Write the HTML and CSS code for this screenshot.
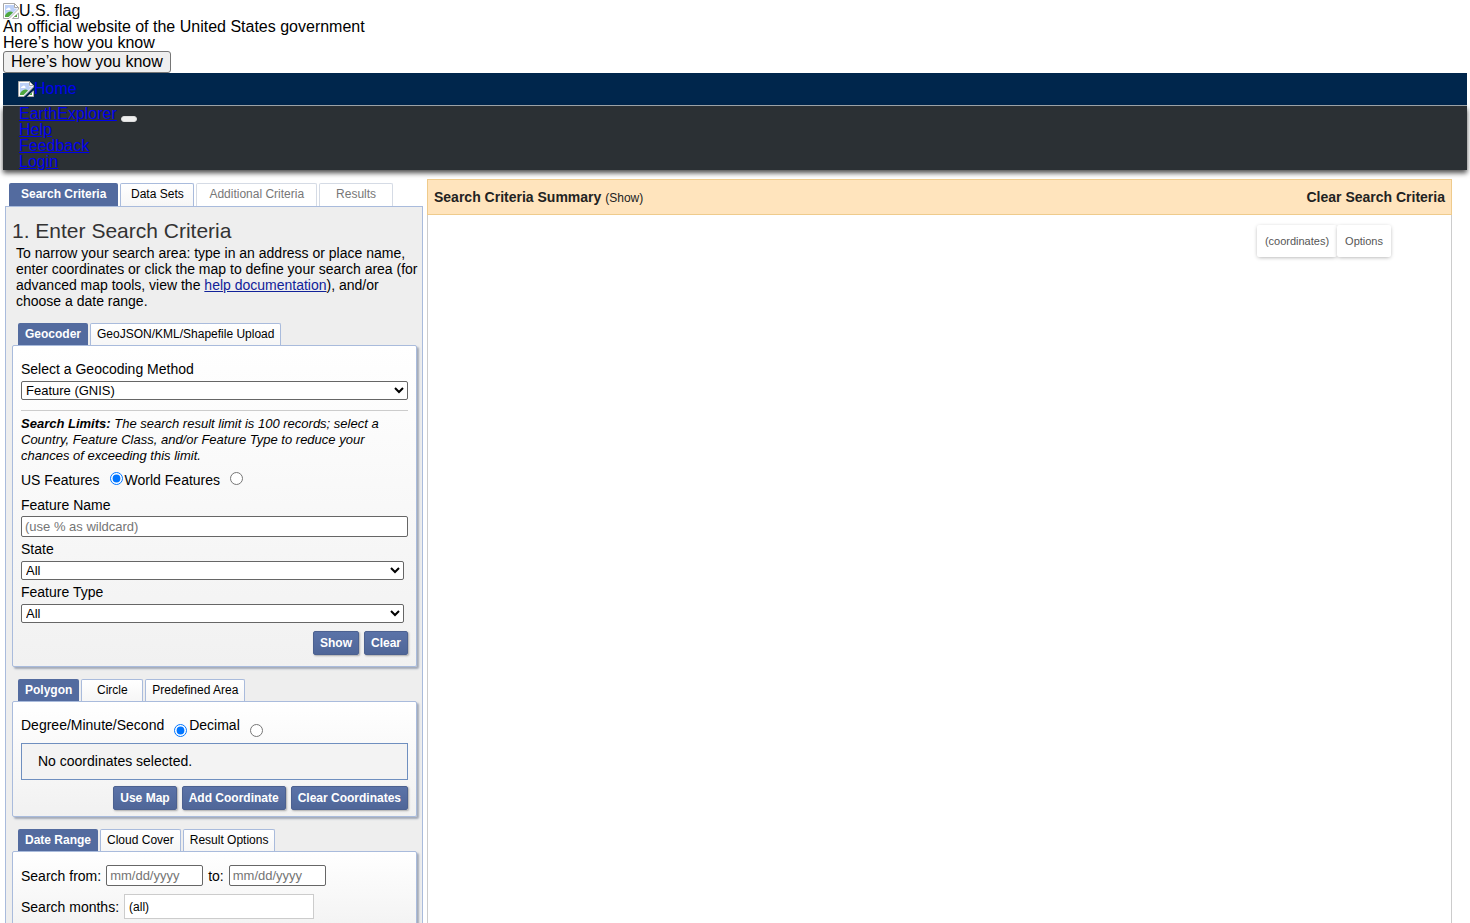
FILE: index.html
```html
<!DOCTYPE html>
<html lang="en">
<head>
    <meta charset="UTF-8">
    <meta name="viewport" content="width=device-width, initial-scale=1.0">
    <title>EarthExplorer</title>
    <link rel="stylesheet" href="styles.css">
</head>
<body>
    <svg class="defs" width="0" height="0" aria-hidden="true">
        <symbol id="photo" viewBox="0 0 16 16">
            <path d="M.5 .5h11l4 4V6l-9.500 9.500H.5z" fill="#fff" stroke="#a9a9a9"/>
            <path d="M2 2h9v3.500h3.500L6 14H2z" fill="#bcd0f7"/>
            <path d="M3.500 7h3.500c.8 0 .8-1.400 0-1.500-.3-1.200-1.800-1.200-2.200-.2-.8-.2-1.200.2-1.200.6-.8.200-.8 1.100-.1 1.100z" fill="#fff"/>
            <path d="M2 14v-1.500C3.500 10 5.500 8.500 7.500 8.500c1 0 1.800.3 2.500 1L5.500 14z" fill="#4fa83d"/>
            <path d="M11.500 .5v4h4z" fill="#fff" stroke="#a9a9a9"/>
            <path d="M9.500 15.500l6-5.500v5.500z" fill="#fff" stroke="#a9a9a9"/>
            <path d="M11 14l3-2.500V14z" fill="#4fa83d"/>
        </symbol>
    </svg>

    <div class="gov-banner">
        <div class="picture"><svg class="photo"><use href="#photo"/></svg>U.S. flag</div>
        <p>An official website of the United States government</p>
        <p>Here’s how you know</p>
        <button type="button" class="gov-button">Here’s how you know</button>
    </div>

    <header class="header">
        <div class="logo-bar">
            <a class="picture" href="#"><svg class="photo"><use href="#photo"/></svg>Home</a>
        </div>
        <nav class="nav">
            <div class="brand">
                <a href="#">EarthExplorer</a>
                <button type="button" class="nav-toggle" aria-label="Toggle navigation"></button>
            </div>
            <ul>
                <li><a href="#">Help</a></li>
                <li><a href="#">Feedback</a></li>
                <li><a href="#">Login</a></li>
            </ul>
        </nav>
    </header>

    <main class="main">
        <div class="sidebar">
            <div class="tabs main-tabs">
                <button type="button" class="tab tab-wide active">Search Criteria</button>
                <button type="button" class="tab">Data Sets</button>
                <button type="button" class="tab tab-wide" disabled>Additional Criteria</button>
                <button type="button" class="tab" disabled>Results</button>
            </div>
            <div class="criteria">
                <h1>1. Enter Search Criteria</h1>
                <p class="intro">To narrow your search area: type in an address or place name, enter coordinates or click the map to define your search area (for advanced map tools, view the <a href="#">help documentation</a>), and/or choose a date range.</p>

                <div class="tabs">
                    <button type="button" class="tab active">Geocoder</button>
                    <button type="button" class="tab">GeoJSON/KML/Shapefile Upload</button>
                </div>
                <form class="panel">
                    <div class="field method">
                        <label for="method">Select a Geocoding Method</label>
                        <select id="method"><option>Feature (GNIS)</option></select>
                    </div>
                    <p class="limits"><strong>Search Limits:</strong> The search result limit is 100 records; select a Country, Feature Class, and/or Feature Type to reduce your chances of exceeding this limit.</p>
                    <div class="radios">
                        <label for="us">US Features</label>
                        <input type="radio" id="us" name="features" checked>
                        <label for="world">World Features</label>
                        <input type="radio" id="world" name="features">
                    </div>
                    <div class="field">
                        <label for="name">Feature Name</label>
                        <input type="text" id="name" placeholder="(use % as wildcard)">
                    </div>
                    <div class="field short">
                        <label for="state">State</label>
                        <select id="state"><option>All</option></select>
                    </div>
                    <div class="field short">
                        <label for="type">Feature Type</label>
                        <select id="type"><option>All</option></select>
                    </div>
                    <div class="actions">
                        <button type="button" class="btn">Show</button>
                        <button type="button" class="btn">Clear</button>
                    </div>
                </form>

                <div class="tabs">
                    <button type="button" class="tab active">Polygon</button>
                    <button type="button" class="tab">Circle</button>
                    <button type="button" class="tab">Predefined Area</button>
                </div>
                <form class="panel panel-area">
                    <div class="radios radios-low">
                        <label for="dms">Degree/Minute/Second</label>
                        <input type="radio" id="dms" name="units" checked>
                        <label for="decimal">Decimal</label>
                        <input type="radio" id="decimal" name="units">
                    </div>
                    <p class="coordinates">No coordinates selected.</p>
                    <div class="actions">
                        <button type="button" class="btn">Use Map</button>
                        <button type="button" class="btn">Add Coordinate</button>
                        <button type="button" class="btn">Clear Coordinates</button>
                    </div>
                </form>

                <div class="tabs">
                    <button type="button" class="tab active">Date Range</button>
                    <button type="button" class="tab">Cloud Cover</button>
                    <button type="button" class="tab">Result Options</button>
                </div>
                <form class="panel">
                    <div class="dates">
                        <label for="from">Search from:</label>
                        <input type="text" id="from" placeholder="mm/dd/yyyy">
                        <label for="to">to:</label>
                        <input type="text" id="to" placeholder="mm/dd/yyyy">
                    </div>
                    <div class="dates">
                        <label for="months">Search months:</label>
                        <button type="button" class="months" id="months">(all)</button>
                    </div>
                </form>
            </div>
        </div>

        <section class="map">
            <div class="summary">
                <div>
                    <strong>Search Criteria Summary</strong>
                    <button type="button" class="text-button">(Show)</button>
                </div>
                <button type="button" class="text-button clear-all">Clear Search Criteria</button>
            </div>
            <div class="map-controls">
                <button type="button">(coordinates)</button>
                <button type="button">Options</button>
            </div>
        </section>
    </main>
</body>
</html>
```
FILE: styles.css
```css
* {
    box-sizing: border-box;
}

body {
    display: flex;
    flex-direction: column;
    height: 100vh;
    margin: 0;
    padding: 3px 3px 0;
    overflow: hidden;
    font-family: "Liberation Sans", Arial, sans-serif;
    font-size: 16px;
    line-height: 16px;
    color: #000;
    background: #fff;
}

h1, p, ul {
    margin: 0;
    padding: 0;
}

button, input, select {
    margin: 0;
    font-family: inherit;
}

.defs {
    position: absolute;
}

/* banner */
.gov-banner {
    display: flex;
    flex-direction: column;
    align-items: flex-start;
}

.picture {
    display: flex;
}

.photo {
    width: 16px;
    height: 16px;
}

.gov-button {
    height: 22px;
    padding: 0 7px;
    font-size: 16px;
    border: 1px solid #767676;
    border-radius: 3px;
    background: #efefef;
}

/* header */
.header {
    flex: none;
}

.header a {
    color: #0000ee;
}

.logo-bar {
    height: 33px;
    padding: 8px 15px;
    background: #00264c;
    border-bottom: 1px solid #a6adb3;
}

.logo-bar .picture {
    text-decoration: none;
}

.nav {
    padding: 0 16px;
    background: #2b3034;
    box-shadow: 0 3px 5px rgba(0, 0, 0, 0.7);
}

.nav ul {
    list-style: none;
}

.brand {
    display: flex;
    gap: 4px;
    height: 16px;
    align-items: flex-end;
}

.nav-toggle {
    width: 16px;
    height: 6px;
    padding: 0;
    border: 1px solid #ddd;
    border-radius: 3px;
    background: #efefef;
}

/* layout */
.main {
    display: flex;
    flex: 1;
    gap: 4px;
    min-height: 0;
    padding: 9px 15px 0 2px;
}

.sidebar {
    display: flex;
    flex-direction: column;
    flex: none;
    width: 418px;
    padding-top: 4px;
    overflow: hidden;
}

.criteria {
    flex: 1;
    min-height: 0;
    padding: 13px 5px 0 6px;
    overflow: hidden;
    border: 1px solid #a9bbdc;
    border-bottom: 0;
    background: #eee;
}

.criteria h1 {
    font-size: 21px;
    font-weight: normal;
    line-height: 22px;
    color: #333;
}

.intro {
    margin: 0 -5px 14px 0;
    padding: 3px 0 0 4px;
    font-size: 14px;
    line-height: 16px;
}

.intro a {
    color: #112299;
}

/* tabs */
.tabs {
    display: flex;
    gap: 2px;
    padding-left: 6px;
}

.main-tabs {
    padding-left: 4px;
}

.tab {
    height: 22px;
    min-width: 62px;
    padding: 0 6px 1px;
    font-size: 12px;
    color: #000;
    border: 1px solid #a9bbdc;
    border-bottom: 0;
    border-radius: 2px 2px 0 0;
    background: linear-gradient(#fff, #f6f6f6);
}

.tab.active {
    padding: 0 7px;
    min-width: 0;
    font-weight: bold;
    color: #fff;
    border: 0;
    background: #536b9f;
}

.tab:disabled {
    color: #777;
    border-color: #d5dbe5;
    background: #fff;
}

.main-tabs .tab {
    height: 23px;
    min-width: 74px;
    padding-bottom: 2px;
}

.main-tabs .tab-wide {
    padding: 0 12px 2px;
}

/* panels */
.panel {
    margin-bottom: 12px;
    padding: 15px 8px 11px;
    border: 1px solid #a9bbdc;
    border-radius: 2px;
    background: linear-gradient(#fff, #f1f1f1);
    box-shadow: 2px 2px 2px #a3aab8;
    font-size: 14px;
}

.panel-area {
    padding-bottom: 6px;
}

.panel select {
    display: block;
    width: 100%;
    height: 19px;
    padding: 0;
    font-size: 13px;
    border: 1px solid #666;
    border-radius: 2px;
    color: #000;
    background-color: #fff;
}

.panel input[type="text"] {
    display: block;
    width: 100%;
    height: 21px;
    padding: 0 3px;
    font-size: 13px;
    border: 1px solid #666;
    border-radius: 2px;
    background: #fff;
}

.panel input::placeholder {
    color: #757575;
}

.field {
    display: flex;
    flex-direction: column;
    gap: 3px;
    margin-bottom: 4px;
}

.method {
    gap: 4px;
    margin-bottom: 0;
    padding-bottom: 10px;
    border-bottom: 1px solid #ccc;
}

.field.short {
    gap: 4px;
}

.field.short select {
    width: 99%;
}

.limits {
    padding: 5px 0 8px;
    font-size: 13px;
    font-style: italic;
}

.radios {
    display: flex;
    gap: 2px;
    margin-bottom: 9px;
}

.radios input {
    width: 13px;
    height: 13px;
    margin-left: 8px;
}

.radios-low input {
    margin-top: 7px;
}

.radios-low {
    margin-bottom: 6px;
}

.coordinates {
    margin-bottom: 6px;
    padding: 9px 16px 10px;
    border: 1px solid #6f8fbf;
    background: #f3f3f3;
}

.actions {
    display: flex;
    justify-content: flex-end;
    gap: 5px;
}

.field + .actions {
    margin-top: 8px;
}

.btn {
    height: 24px;
    padding: 0 6px;
    font-size: 12px;
    font-weight: bold;
    color: #fff;
    border: 1px solid #4c6190;
    border-radius: 2px;
    background: linear-gradient(#5b73a8, #4f6698);
    box-shadow: 1px 1px 2px #aaa;
}

.dates {
    display: flex;
    align-items: center;
    gap: 5px;
    margin: -2px 0 10px;
}

.dates input[type="text"] {
    width: 97px;
}

.months {
    width: 190px;
    height: 25px;
    padding: 0 4px;
    font-size: 12px;
    text-align: left;
    color: #000;
    border: 1px solid #ccc;
    background: #fff;
}

/* map */
.map {
    flex: 1;
    position: relative;
    border: 1px solid #ccc;
    border-width: 0 1px;
}

.summary {
    display: flex;
    justify-content: space-between;
    align-items: center;
    height: 36px;
    margin: 0 -1px;
    padding: 0 6px;
    font-size: 14px;
    color: #222;
    border: 1px solid #efcb8c;
    background: #ffe4bd;
}

.text-button {
    padding: 0;
    font-size: 12px;
    color: #222;
    border: 0;
    background: none;
}

.clear-all {
    font-size: 14px;
    font-weight: bold;
}

.map-controls {
    position: absolute;
    top: 46px;
    right: 60px;
    display: flex;
}

.map-controls button {
    height: 32px;
    padding: 0 8px;
    font-size: 11px;
    color: #565656;
    border: 0;
    border-radius: 2px;
    background: #fff;
    box-shadow: 0 1px 4px -1px rgba(0, 0, 0, 0.4);
}
```
